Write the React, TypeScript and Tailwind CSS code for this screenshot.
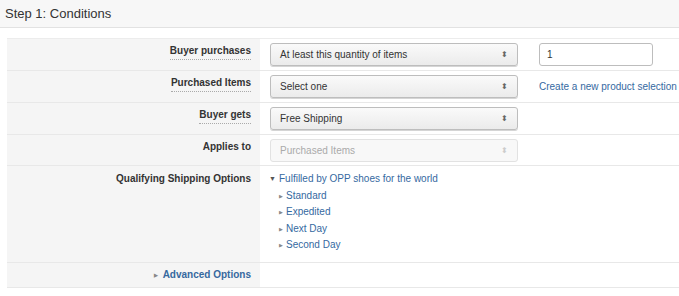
import React from "react"

const font = { fontFamily: '"Liberation Sans", Arial, sans-serif' }

function Select({ value, disabled }: { value: string; disabled?: boolean }) {
  return (
    <div
      className={
        disabled
          ? "w-[248px] h-[23px] flex items-center justify-between px-[9px] rounded-[3px] border border-[#e2e2e2] bg-[#f8f8f8] text-[#aaa]"
          : "w-[248px] h-[23px] flex items-center justify-between px-[9px] rounded-[3px] border border-[#bdbdbd] bg-gradient-to-b from-[#fafafa] to-[#ebebeb] text-[#333] shadow-[0_1px_0_#d5d5d5]"
      }
    >
      <span className="text-[10px]">{value}</span>
      <span className={disabled ? "text-[8px] text-[#ccc]" : "text-[8px] text-[#666]"}>⬍</span>
    </div>
  )
}

function Row({ label, dotted, h, top, children, labelClass }: {
  label: React.ReactNode
  dotted?: boolean
  h: string
  top?: boolean
  children?: React.ReactNode
  labelClass?: string
}) {
  return (
    <div className={`flex border-b border-[#e8e8e8] ${h}`}>
      <div className={`w-[253px] shrink-0 bg-[#f5f5f5] flex justify-end pr-[9px] ${top ? "pt-[6px]" : "items-start pt-[5px]"}`}>
        <span
          className={
            labelClass ??
            (dotted
              ? "text-[10px] font-bold text-[#333] border-b border-dotted border-[#aaa] leading-[14px] h-[16px]"
              : "text-[10px] font-bold text-[#333] leading-[14px]")
          }
        >
          {label}
        </span>
      </div>
      <div className="flex-1 flex items-start pl-[10px]">{children}</div>
    </div>
  )
}

export default function App() {
  return (
    <div className="w-[679px] h-[296px] bg-white overflow-hidden" style={font}>
      <div className="h-[28px] bg-[#f7f7f7] border-b border-[#e2e2e2] flex items-center pl-[5px]">
        <span className="text-[13px] text-[#333]">Step 1: Conditions</span>
      </div>
      <div className="ml-[7px] mt-[10px] border-t border-[#ececec]">
        <Row label="Buyer purchases" dotted h="h-[32px]">
          <div className="pt-[4px] flex items-center">
            <Select value="At least this quantity of items" />
            <div className="ml-[21px] w-[114px] h-[23px] border border-[#bdbdbd] rounded-[3px] bg-white flex items-center px-[7px] text-[10px] text-[#333]">1</div>
          </div>
        </Row>
        <Row label="Purchased Items" dotted h="h-[32px]">
          <div className="pt-[4px] flex items-center">
            <Select value="Select one" />
            <span className="ml-[21px] text-[10px] text-[#35699f] whitespace-nowrap">Create a new product selection</span>
          </div>
        </Row>
        <Row label="Buyer gets" dotted h="h-[32px]">
          <div className="pt-[4px]">
            <Select value="Free Shipping" />
          </div>
        </Row>
        <Row label="Applies to" h="h-[31px]">
          <div className="pt-[4px]">
            <Select value="Purchased Items" disabled />
          </div>
        </Row>
        <Row label="Qualifying Shipping Options" h="h-[97px]" top>
          <div className="pt-[5px] text-[10px] text-[#35699f] leading-[16.5px]">
            <div className="flex items-center">
              <span className="text-[7px] text-[#555] w-[10px] -ml-[1px]">▼</span>
              <span>Fulfilled by OPP shoes for the world</span>
            </div>
            {["Standard", "Expedited", "Next Day", "Second Day"].map((t) => (
              <div key={t} className="flex items-center pl-[9px]">
                <span className="text-[5px] text-[#888] w-[7px]">▶</span>
                <span>{t}</span>
              </div>
            ))}
          </div>
        </Row>
        <Row
          label={
            <span className="flex items-center">
              <span className="text-[5px] text-[#888] mr-[5px]">▶</span>
              Advanced Options
            </span>
          }
          labelClass="text-[10px] font-bold text-[#35699f] leading-[14px]"
          h="h-[25px]"
        />
      </div>
    </div>
  )
}
